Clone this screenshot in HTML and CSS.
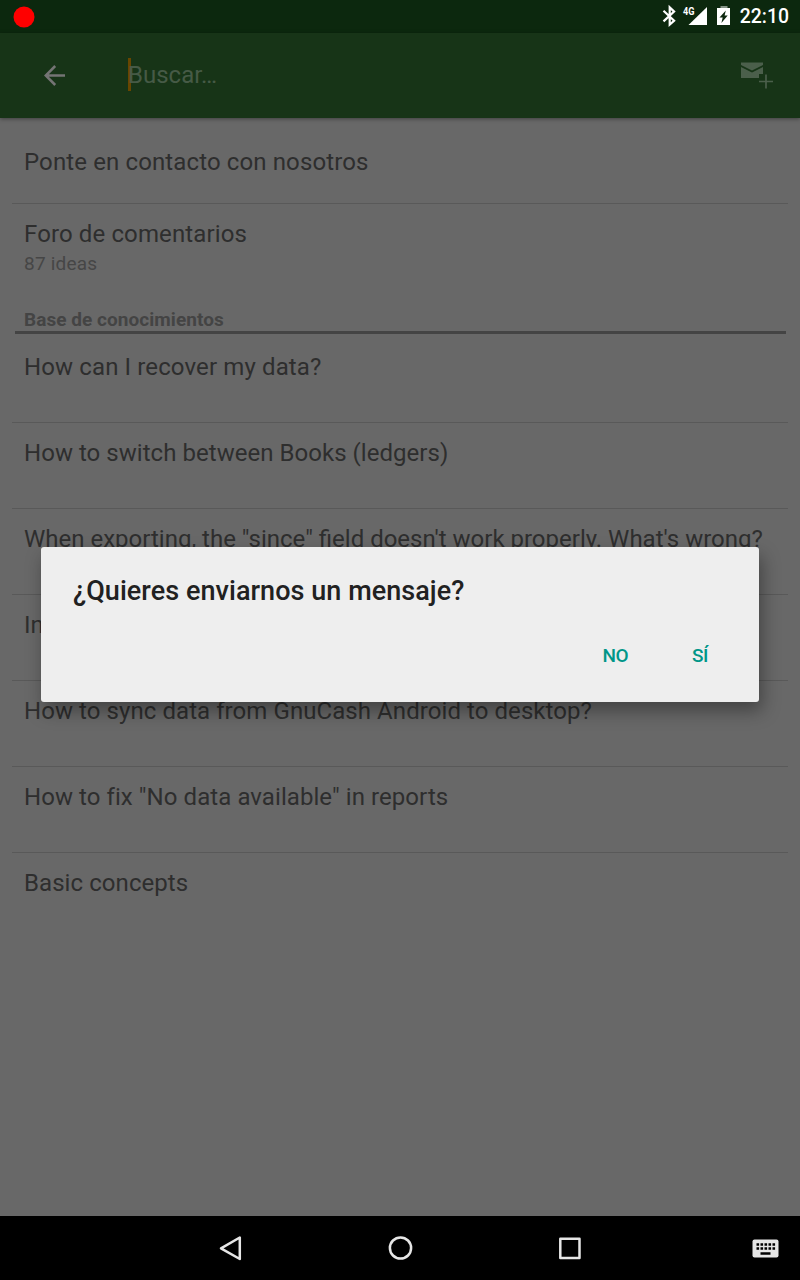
FILE: index.html
```html
<!DOCTYPE html>
<html lang="es">
<head>
<meta charset="utf-8">
<title>Buscar</title>
<link rel="stylesheet" href="styles.css">
</head>
<body>
<div class="screen">
  <header class="status">
    <svg class="record" width="22" height="22" viewBox="0 0 22 22"><circle cx="11" cy="11" r="10.5" fill="#f00"/></svg>
    <svg class="status-icons" width="72" height="33" viewBox="0 0 72 33">
      <path d="M3 10.800 13.600 20.800 9.200 24.600V7.400L13.600 11.600 3 21.400" transform="translate(-.5 0)" fill="none" stroke="#fff" stroke-width="2.200"/>
      <path d="M46 7V25H27.500Z" fill="#fff"/>
      <text x="22" y="15" class="net" textLength="11.500" lengthAdjust="spacingAndGlyphs">4G</text>
      <path d="M59.500 6h7v2h-7z" fill="#869487"/>
      <path d="M56 8h13v17H56z" fill="#fff"/>
      <path d="M64.800 10.500 58.500 17.500h3.200l-1.300 5.500 6.300-7.500h-3.100z" fill="#0c280e"/>
    </svg>
    <span class="clock">22:10</span>
  </header>
  <div class="appbar">
    <svg class="back" width="22" height="22" viewBox="0 0 22 22"><path d="M21 10.500H2M11.200 1 1.700 10.500 11.200 20" fill="none" stroke="#747474" stroke-width="2.500"/></svg>
    <div class="search"><i class="caret"></i>Buscar…</div>
    <svg class="mail" width="33" height="28" viewBox="0 0 33 28">
      <path d="M0 .5H22V3L11 8.500 0 3ZM0 5l11 5.500L22 5v7h-4v4H0Z" fill="#4b5f4b"/>
      <path d="M25 12.500v14M18 19.500h14" stroke="#4b5f4b" stroke-width="1.700"/>
    </svg>
  </div>
  <main class="list">
    <div class="row short wide">Ponte en contacto con nosotros</div>
    <div class="row forum wide">Foro de comentarios<span class="sub">87 ideas</span></div>
    <h2 class="section">Base de conocimientos</h2>
    <div class="row wide">How can I recover my data?</div>
    <div class="row slight">How to switch between Books (ledgers)</div>
    <div class="row">When exporting, the "since" field doesn't work properly. What's wrong?</div>
    <div class="row">In</div>
    <div class="row medium">How to sync data from GnuCash Android to desktop?</div>
    <div class="row medium">How to fix "No data available" in reports</div>
    <div class="row medium last">Basic concepts</div>
  </main>
  <nav class="nav">
    <svg width="800" height="64" viewBox="0 0 800 64" fill="none" stroke="#e6e6e6" stroke-width="2.500" stroke-linejoin="round">
      <path d="M239.800 21.500v21.500L221 32.300Z"/>
      <circle cx="400.500" cy="32" r="10.600"/>
      <rect x="560.300" y="22.800" width="19.200" height="19.200"/>
      <rect x="752.500" y="23.500" width="26" height="18" rx="2" fill="#e6e6e6" stroke="none"/>
      <path d="M756.500 28.500h18.800M756.500 32.500h18.800" stroke="#000" stroke-dasharray="2.600 1.400"/>
      <path d="M760.500 37.500h10" stroke="#000"/>
    </svg>
  </nav>
  <div class="dialog">
    <div class="title">¿Quieres enviarnos un mensaje?</div>
    <div class="actions"><span class="button no">NO</span><span class="button yes">SÍ</span></div>
  </div>
</div>
</body>
</html>
```
FILE: styles.css
```css
body { margin: 0; font-family: Roboto, "Liberation Sans", sans-serif; }
.screen { position: relative; display: flex; flex-direction: column; width: 800px; height: 1280px; overflow: hidden; background: #686868; }
svg { display: block; flex: none; }
.status { display: flex; align-items: center; height: 33px; padding: 0 11px 0 13px; background: #0c280e; color: #fff; }
.status-icons { margin-left: auto; margin-right: 7px; }
.net { font: 700 10.500px Roboto, sans-serif; fill: #fff; }
.clock { font-size: 19.400px; font-weight: 500; line-height: 34px; }
.appbar { display: flex; align-items: center; box-sizing: border-box; height: 85px; padding: 0 26px 0 44px; background: #173417; color: #465a46; font-size: 24px; z-index: 1; box-shadow: 0 1px 4px rgba(0,0,0,.4); }
.search { display: flex; align-items: center; margin-left: 62px; padding-bottom: 2px; }
.caret { width: 3px; height: 33px; margin-right: -3px; background: #684600; }
.mail { margin-left: auto; }
.list { flex: 1; padding: 14px 12px 0; color: #2e2e2e; font-size: 24px; line-height: 28px; }
.row { box-sizing: border-box; height: 86px; padding: 16px 12px 0; border-bottom: 1px solid #595959; white-space: nowrap; }
.wide { letter-spacing: .12px; }
.medium { letter-spacing: .07px; }
.slight { letter-spacing: .04px; }
.short { height: 72px; }
.forum { height: 94px; border: 0; }
.last { border: 0; }
.sub { display: block; margin-top: 5px; color: #464646; font-size: 19px; letter-spacing: .2px; line-height: 22px; }
.section { box-sizing: border-box; height: 36px; margin: 0 2.500px 3px; padding: 11px 9.500px 0; border-bottom: 3px solid #444; color: #444; font-size: 19px; letter-spacing: .05px; font-weight: 700; line-height: 22px; }
.nav { height: 64px; background: #000; }
.dialog { position: absolute; left: 41px; top: 547px; box-sizing: border-box; width: 718px; height: 155px; padding: 28px 51px 0 32px; border-radius: 3px; background: #eee; box-shadow: 3px 9px 18px rgba(0,0,0,.36); z-index: 2; }
.title { color: #212121; font-size: 27px; letter-spacing: .05px; font-weight: 500; line-height: 32px; }
.actions { display: flex; justify-content: flex-end; gap: 64px; margin-top: 37px; color: #009688; font-size: 19px; letter-spacing: -.5px; font-weight: 500; line-height: 24px; }
```
